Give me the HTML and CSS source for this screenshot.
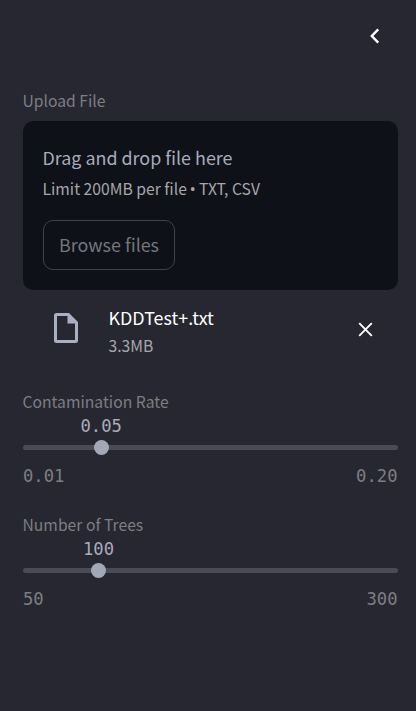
FILE: index.html
```html
<!DOCTYPE html>
<html lang="en">
<head>
<meta charset="utf-8">
<title>Settings</title>
<link rel="stylesheet" href="styles.css">
</head>
<body>
<aside class="sidebar">
  <header class="topbar">
    <svg class="chevron" width="10" height="16" viewBox="0 0 10 16"><path d="M8.2 1.4 1.8 8l6.4 6.6"/></svg>
  </header>
  <section class="upload">
    <div class="label"><span>Upload File</span></div>
    <div class="dropzone">
      <div class="drop-title"><span>Drag and drop file here</span></div>
      <div class="drop-limit">Limit 200MB per file <span class="bullet">•</span> TXT, CSV</div>
      <button class="browse" type="button"><span>Browse files</span></button>
    </div>
    <div class="file">
      <svg class="file-icon" width="24" height="30" viewBox="0 0 24 30"><path d="M2.5 0H15L24 9V27.5a2.5 2.5 0 0 1-2.5 2.5H2.5a2.5 2.5 0 0 1-2.5-2.5V2.500a2.500 2.500 0 0 1 2.500-2.500ZM3 3V27H21V10.500H13.500V3Z" fill-rule="evenodd"/></svg>
      <div class="file-info">
        <div class="file-name"><span>KDDTest+.txt</span></div>
        <div class="file-size"><span>3.3MB</span></div>
      </div>
      <svg class="close" width="15" height="15" viewBox="0 0 15 15"><path d="M1.200 1.200 13.800 13.800M13.800 1.200 1.200 13.800"/></svg>
    </div>
  </section>
  <section class="slider">
    <div class="label"><span>Contamination Rate</span></div>
    <div class="value value-rate">0.05</div>
    <div class="track"><div class="thumb thumb-rate"></div></div>
    <div class="range"><span>0.01</span><span>0.20</span></div>
  </section>
  <section class="slider">
    <div class="label"><span>Number of Trees</span></div>
    <div class="value value-trees">100</div>
    <div class="track"><div class="thumb thumb-trees"></div></div>
    <div class="range"><span>50</span><span>300</span></div>
  </section>
</aside>
</body>
</html>
```

FILE: styles.css
```css
* { box-sizing: border-box; }
body { margin: 0; background: #262730; }
.sidebar {
  height: 711px;
  padding: 0 18px 0 23px;
  background: #262730;
  font-family: "Noto Sans CJK SC", "Noto Sans", sans-serif;
  white-space: nowrap;
}
.topbar { height: 88px; display: flex; justify-content: flex-end; padding: 28px 18px 0 0; }
.chevron, .close { fill: none; stroke: #fff; stroke-width: 2.4; }
.label { height: 28px; line-height: 26px; font-size: 15.7px; color: #7e7e82; text-indent: -0.5px; }
.upload { height: 301px; }
.upload .label { height: 33px; }
.dropzone { height: 169px; padding: 22px 20px 20px; border-radius: 10px; background: #0e1117; }
.drop-title { height: 32px; line-height: 28px; font-size: 17.9px; color: #a8adbc; text-indent: -0.5px; }
.drop-limit { height: 45px; line-height: 28px; font-size: 15.7px; color: #a6a7ab; text-indent: -0.5px; }
.bullet { display: inline-block; width: 5px; font-family: "Open Sans", sans-serif; font-size: 17px; line-height: 20px; text-indent: -0.8px; }
.browse {
  display: block; width: 132px; height: 50px; padding: 0 0 2px;
  border: 1px solid #404246; border-radius: 10px; background: transparent;
  color: #74767a; font-family: inherit; font-size: 17.9px; line-height: 46px;
}
.file { display: flex; height: 78px; padding: 13px 25px 0 31px; }
.file-icon { margin-top: 10px; fill: #a9afc5; }
.file-info { flex: 1; padding-left: 30.5px; }
.file-name { height: 29px; line-height: 28px; font-size: 17.9px; color: #fff; }
.file-size { line-height: 28px; font-size: 15.7px; color: #a6a7ab; }
.close { margin-top: 19px; stroke-width: 1.9; }
.slider { height: 123px; }
.value, .range { font-family: "DejaVu Sans Mono", monospace; font-size: 17.2px; }
.value { height: 28px; line-height: 18px; color: #a8acbb; }
.value-rate { padding-left: 57.5px; }
.value-trees { padding-left: 60px; }
.track { height: 5px; border-radius: 3px; background: #4a4b56; }
.thumb { width: 15px; height: 15px; border-radius: 50%; background: #a3a8b8; transform: translateY(-5px); }
.thumb-rate { margin-left: 71px; }
.thumb-trees { margin-left: 68px; }
.range { display: flex; justify-content: space-between; padding: 16px 0.5px 0 0; line-height: 20px; color: #7e7e82; }
```
